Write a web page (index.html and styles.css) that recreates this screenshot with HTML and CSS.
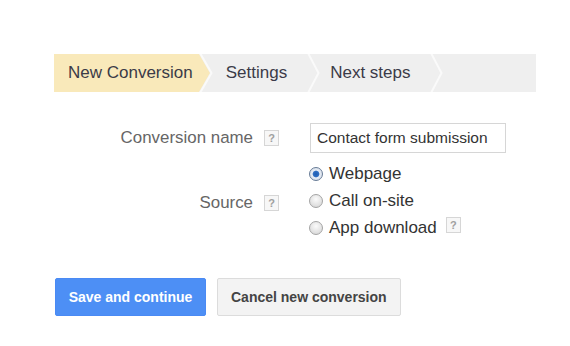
FILE: index.html
```html
<!DOCTYPE html>
<html lang="en">
<head>
  <meta charset="UTF-8" />
  <title>New Conversion</title>
  <link rel="stylesheet" href="styles.css">
</head>
<body>
  <div class="page">
    <!-- Wizard steps -->
    <div class="steps">
      <div class="step active">New Conversion</div>
      <svg class="sep first" width="14" height="38" viewBox="0 0 14 38">
        <polygon points="0,0 11,19 0,38" fill="#f9e9ba" />
        <polyline points="1,-1 12.5,19 1,39" fill="none" stroke="#fafafa" stroke-width="2" />
      </svg>
      <div class="step settings">Settings</div>
      <svg class="sep" width="13" height="38" viewBox="0 0 13 38">
        <polyline points="1,-1 11.5,19 1,39" fill="none" stroke="#fafafa" stroke-width="2" />
      </svg>
      <div class="step next">Next steps</div>
      <svg class="sep" width="13" height="38" viewBox="0 0 13 38">
        <polyline points="1,-1 11.5,19 1,39" fill="none" stroke="#fafafa" stroke-width="2" />
      </svg>
    </div>

    <!-- Form -->
    <div class="form">
      <div class="label">Conversion name</div>
      <span class="help">?</span>
      <input class="text-input" type="text" value="Contact form submission" />

      <div class="label source">Source</div>
      <span class="help source">?</span>
      <div class="radios">
        <label class="radio"><input type="radio" name="source" checked /> Webpage</label>
        <label class="radio"><input type="radio" name="source" /> Call on-site</label>
        <label class="radio"><input type="radio" name="source" /> App download <span class="help inline">?</span></label>
      </div>
    </div>

    <div class="actions">
      <button class="btn primary">Save and continue</button>
      <button class="btn">Cancel new conversion</button>
    </div>
  </div>
</body>
</html>
```

FILE: styles.css
```css
* { box-sizing: border-box; }
body {
  margin: 0;
  background: #fff;
  font-family: "Liberation Sans", Arial, sans-serif;
}
.page {
  padding: 54px 0 0 54px;
}
.steps {
  display: flex;
  align-items: stretch;
  width: 482px;
  height: 38px;
  background: #efefef;
}
.step {
  line-height: 38px;
  font-size: 17px;
  color: #3b3b48;
  white-space: nowrap;
}
.step.active {
  background: #f9e9ba;
  padding: 0 6px 0 14px;
}
.step.settings { padding: 0 20px 0 13px; }
.step.next { padding: 0 20px 0 10px; }
.sep { display: block; flex: none; }

.form {
  display: grid;
  grid-template-columns: 199px 15px auto;
  column-gap: 11px;
  row-gap: 7px;
  align-items: center;
  margin-top: 31px;
}
.form .text-input,
.form .radios { margin-left: 20px; }
.label {
  text-align: right;
  font-size: 16.9px;
  color: #666;
}
.source { margin-top: 4px; }
.help {
  display: inline-block;
  width: 15px;
  height: 16px;
  border: 1px solid #d6d6d6;
  background: #f7f7f7;
  color: #a0a0a0;
  font-size: 11px;
  font-weight: bold;
  line-height: 14px;
  text-align: center;
}
.help.inline {
  margin-left: 9px;
  margin-top: -6px;
}
.text-input {
  width: 196px;
  height: 30px;
  padding: 0 6px;
  border: 1px solid #d6d6d6;
  font-family: inherit;
  font-size: 15.5px;
  color: #333;
}
.radios {
  display: flex;
  flex-direction: column;
}
.radio {
  display: flex;
  align-items: center;
  height: 27px;
  font-size: 17px;
  color: #333;
}
.radio input {
  appearance: none;
  flex: none;
  width: 14px;
  height: 14px;
  margin: 0 6px 0 -1px;
  border: 1px solid #a4a4a4;
  border-radius: 50%;
  background: radial-gradient(circle at 50% 35%, #fbfbfb, #d2d2d2);
}
.radio input:checked {
  border-color: #677b96;
  background: radial-gradient(circle, #1d5cb2 0, #2e6dc2 2.8px, #e6ecf5 3.8px, #cfd7e3 100%);
}

.actions {
  display: flex;
  gap: 11px;
  margin: 37px 0 0 1px;
}
.btn {
  height: 38px;
  padding: 0 13px;
  border: 1px solid #dcdcdc;
  border-radius: 2px;
  background: #f3f3f3;
  color: #444;
  font-family: inherit;
  font-size: 14px;
  font-weight: bold;
  white-space: nowrap;
}
.btn.primary {
  width: 151px;
  padding: 0;
  border-color: #4a8af4;
  background: #4d8ff5;
  color: #fff;
}
```
